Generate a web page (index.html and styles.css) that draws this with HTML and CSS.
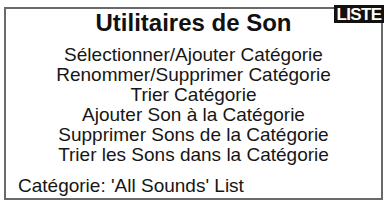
FILE: index.html
```html
<!DOCTYPE html>
<html lang="fr">
<head>
<meta charset="utf-8">
<link rel="stylesheet" href="styles.css">
</head>
<body>
<div class="screen">
  <div class="frame">
    <h1 class="title">Utilitaires de Son</h1>
    <ul class="menu">
      <li>Sélectionner/Ajouter Catégorie</li>
      <li>Renommer/Supprimer Catégorie</li>
      <li>Trier Catégorie</li>
      <li>Ajouter Son à la Catégorie</li>
      <li>Supprimer Sons de la Catégorie</li>
      <li>Trier les Sons dans la Catégorie</li>
    </ul>
    <div class="status">Catégorie: 'All Sounds' List</div>
  </div>
  <div class="badge">LISTE</div>
</div>
</body>
</html>
```

FILE: styles.css
```css
html, body {
  margin: 0;
  padding: 0;
  background: #ffffff;
}
body {
  width: 385px;
  height: 201px;
  overflow: hidden;
  font-family: "Liberation Sans", Arial, sans-serif;
  color: #161616;
}
.screen {
  position: relative;
  width: 385px;
  height: 201px;
  padding: 7px 2px 1px 4px;
  box-sizing: border-box;
}
.frame {
  box-sizing: border-box;
  width: 379px;
  height: 193px;
  border: 2px solid #6a6a6a;
  display: flex;
  flex-direction: column;
}
.title {
  margin: 2px 0 0 0;
  font-size: 24px;
  line-height: 24px;
  font-weight: bold;
  text-align: center;
  color: #111;
}
.menu {
  list-style: none;
  margin: 10px 0 0 0;
  padding: 0;
  text-align: center;
  font-size: 19px;
  line-height: 20px;
}
.menu li {
  margin: 0;
}
.status {
  margin-top: 11px;
  padding-left: 12px;
  font-size: 19px;
  line-height: 20px;
}
.badge {
  position: absolute;
  top: 5px;
  right: 1px;
  width: 50px;
  height: 18px;
  background: #111;
  color: #fff;
  font-weight: bold;
  font-size: 17px;
  line-height: 19px;
  text-align: center;
  letter-spacing: -0.6px;
}
```
